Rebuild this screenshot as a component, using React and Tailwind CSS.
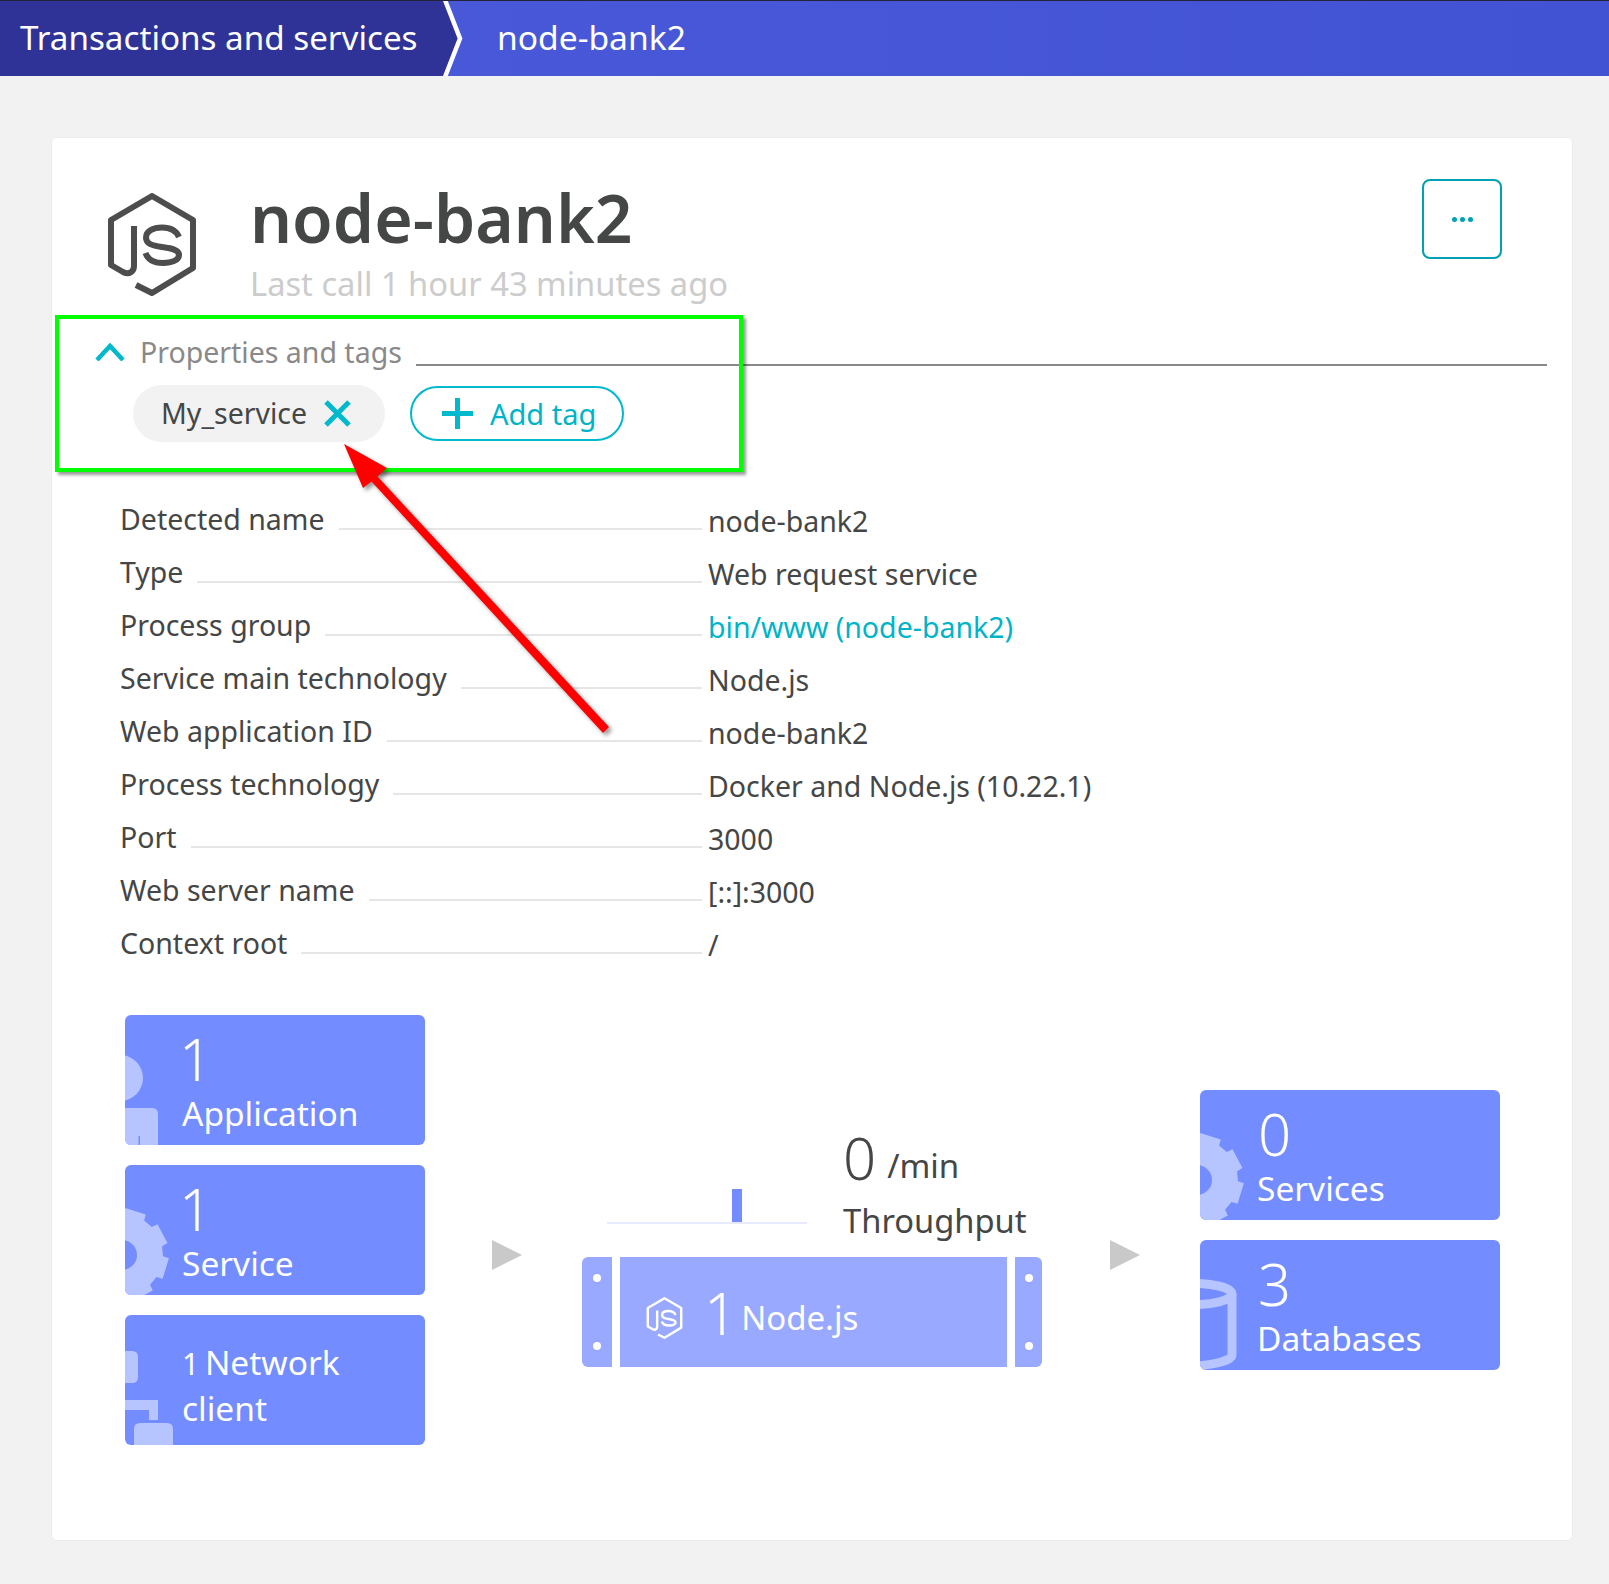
import React from 'react';

const rows = [
  ['Detected name', 'node-bank2'],
  ['Type', 'Web request service'],
  ['Process group', 'bin/www (node-bank2)', true],
  ['Service main technology', 'Node.js'],
  ['Web application ID', 'node-bank2'],
  ['Process technology', 'Docker and Node.js (10.22.1)'],
  ['Port', '3000'],
  ['Web server name', '[::]:3000'],
  ['Context root', '/'],
];

// gear outline, 8 teeth round 0,0
const gearPath = () => {
  const pts = [];
  for (let i = 0; i < 8; i++) {
    const a = (i * Math.PI) / 4 + 0.3;
    const w = 0.23;
    [[41, -w - 0.04], [47, -w], [47, w], [41, w + 0.04]].forEach(([r, d]) => {
      pts.push(`${(r * Math.cos(a + d)).toFixed(1)} ${(r * Math.sin(a + d)).toFixed(1)}`);
    });
  }
  return `M${pts.join('L')}Z`;
};

const JsIcon = ({ className, color }) => (
  <svg viewBox="14 13 88 103" className={className} fill="none" stroke={color} strokeWidth="6">
    <path d="M42 105 L58 113 L99 88 V40 L58 16 L17 40 V85 L29 92 C35 95 40 92 40 86 V46" strokeLinejoin="round" />
    <path d="M85 57 C82 50 75 47.5 68 47.5 C59 47.5 52 51 52 57.5 C52 64 58 65.5 68 67 C79 68.5 85 70 85 75 C85 80 78 83 69 83 C60 83 54 80 51.5 73" />
  </svg>
);

const TileIcon = ({ kind }) => (
  <svg viewBox="0 0 60 130" className="absolute left-0 top-0 w-[60px] h-[130px]" fill="#b6c4ff">
    {kind === 'person' && (
      <>
        <circle cx="-5" cy="63" r="23" />
        <path d="M0 93 H27 Q33 93 33 99 V130 H0 Z" />
        <path d="M13.5 121 H15 V130 H13.5 Z" fill="#738cff" />
      </>
    )}
    {kind === 'gear' && (
      <path d={gearPath()} transform="translate(-3 90)" fill="#b6c4ff" stroke="none" />
    )}
    {kind === 'gear' && <circle cx="-3" cy="90" r="15" fill="#738cff" />}
    {kind === 'network' && (
      <>
        <path d="M0 36 H7 Q13 36 13 42 V62 Q13 68 7 68 H0 Z" />
        <path d="M0 85 H33 V105 H24 V95 H0 Z" />
        <path d="M15 108 H42 Q48 108 48 114 V130 H9 V114 Q9 108 15 108 Z" />
      </>
    )}
    {kind === 'db' && (
      <g fill="none" stroke="#b6c4ff" strokeWidth="9">
        <ellipse cx="-12" cy="54" rx="44" ry="11" />
        <path d="M32 54 V115 Q32 123 -12 127" />
      </g>
    )}
  </svg>
);

const Tile = ({ kind, num, label }) => (
  <div className="relative h-[130px] w-[300px] overflow-hidden rounded-[6px] bg-[#738cff] pl-[57px] text-white">
    <TileIcon kind={kind} />
    <div className={`relative pt-[9px] text-[58px] font-light leading-[70px] ${num === '1' ? 'ml-[-3px]' : 'ml-[1px]'}`}>{num}</div>
    <div className="relative mt-[-1px] text-[33.5px] leading-[40px]">{label}</div>
  </div>
);

const Dots = () => (
  <>
    <span className="h-[8px] w-[8px] rounded-full bg-white" />
    <span className="h-[8px] w-[8px] rounded-full bg-white" />
  </>
);

const Play = () => (
  <svg viewBox="0 0 30 30" className="h-[30px] w-[30px] shrink-0">
    <path d="M0 0 L30 15 L0 30 Z" fill="#c9c9c9" />
  </svg>
);

export default function App() {
  return (
    <div className="relative h-[1584px] w-[1609px] overflow-hidden bg-[#f2f2f2] font-['Noto_Sans',sans-serif] text-[#454646]">
      {/* breadcrumb */}
      <div className="flex h-[76px] border-t border-[#23233a] bg-gradient-to-r from-[#4b5bda] to-[#4152d3] text-white">
        <div className="flex w-[442px] items-center bg-[#2f3397] pb-[2px] pl-[20px] text-[33.2px]">Transactions and services</div>
        <svg viewBox="0 0 24 75" className="h-[75px] w-[24px] shrink-0">
          <path d="M0 0 H3 L17.5 37.5 L3 75 H0 Z" fill="#2f3397" />
          <path d="M3 -1 L18 37.5 L3 76" fill="none" stroke="white" strokeWidth="4.5" />
        </svg>
        <div className="flex items-center pb-[2px] pl-[31px] text-[33.6px]">node-bank2</div>
      </div>

      {/* card */}
      <div className="ml-[51px] mt-[61px] h-[1404px] w-[1522px] rounded-[6px] border border-[#ececec] bg-white">
        <div className="flex h-[188px] items-start pt-[41px] pl-[55px] pr-[70px]">
          <JsIcon className="mt-[14px] h-[103px] w-[90px] shrink-0" color="#4d4d4d" />
          <div className="ml-[53px]">
            <div className="text-[66px] font-semibold leading-[76px]">node-bank2</div>
            <div className="pt-[6px] text-[32.7px] leading-[46px] text-[#cccccc]">Last call 1 hour 43 minutes ago</div>
          </div>
          <div className="ml-auto flex h-[80px] w-[80px] items-center justify-center gap-[3px] rounded-[8px] border-2 border-[#00a1b2]">
            <span className="h-[5px] w-[5px] rounded-full bg-[#00a1b2]" />
            <span className="h-[5px] w-[5px] rounded-full bg-[#00a1b2]" />
            <span className="h-[5px] w-[5px] rounded-full bg-[#00a1b2]" />
          </div>
        </div>

        {/* properties */}
        <div className="flex h-[44px] items-center pl-[43px] pr-[25px] pt-[8px]">
          <svg viewBox="0 0 30 18" className="h-[18px] w-[30px] shrink-0" fill="none" stroke="#00b9cc" strokeWidth="4.5">
            <path d="M2 17 L15 3 L28 17" />
          </svg>
          <span className="ml-[15px] whitespace-nowrap text-[28.5px] leading-[36px] text-[#898989]">Properties and tags</span>
          <div className="ml-[14px] mt-[26px] h-[2px] flex-1 bg-[#898989]" />
        </div>
        <div className="mt-[15px] flex items-center pl-[81px]">
          <div className="flex h-[57px] w-[252px] items-center rounded-full bg-[#f2f2f2] pl-[28px] text-[28.5px]">
            My_service
            <svg viewBox="0 0 27 27" className="ml-[17px] h-[27px] w-[27px]" stroke="#00b9cc" strokeWidth="5">
              <path d="M2 2 L25 25 M25 2 L2 25" />
            </svg>
          </div>
          <div className="ml-[25px] flex h-[55px] w-[214px] items-center rounded-full border-2 border-[#00b9cc] pl-[30px] text-[29px] text-[#00b4c8]">
            <svg viewBox="0 0 31 31" className="h-[31px] w-[31px]" stroke="#00b9cc" strokeWidth="5">
              <path d="M15.5 0 V31 M0 15.5 H31" />
            </svg>
            <span className="ml-[17px]">Add tag</span>
          </div>
        </div>

        {/* detail rows */}
        <div className="mt-[35px] pl-[68px]">
          {rows.map(([label, value, link]) => (
            <div key={label} className="flex h-[53px] text-[28.5px]">
              <div className="flex w-[582px] items-end">
                <span className="mb-[-11px] whitespace-nowrap leading-[44px]">{label}</span>
                <div className="ml-[14px] h-[2px] flex-1 bg-[#e6e6e6]" />
              </div>
              <span className={`ml-[6px] mt-[22px] whitespace-nowrap leading-[44px] ${link ? 'text-[#00b4c8]' : ''}`}>{value}</span>
            </div>
          ))}
        </div>

        {/* stack */}
        <div className="mt-[61px] flex pl-[73px]">
          <div className="flex flex-col gap-[20px]">
            <Tile kind="person" num="1" label="Application" />
            <Tile kind="gear" num="1" label="Service" />
            <div className="relative h-[130px] w-[300px] overflow-hidden rounded-[6px] bg-[#738cff] pl-[57px] pt-[25px] text-[33.5px] leading-[45px] text-white">
              <TileIcon kind="network" />
              <div className="relative"><span className="mr-[-3px] text-[30px]">1</span> Network</div>
              <div className="relative">client</div>
            </div>
          </div>
          <div className="ml-[67px] mt-[225px]"><Play /></div>
          <div className="ml-[60px] w-[460px] pt-[117px]">
            <div className="flex h-[125px]">
              <div className="relative ml-[25px] mt-[56px] h-[36px] w-[200px] border-b-2 border-[#e8ebff]">
                <div className="absolute bottom-0 left-[125px] h-[33px] w-[10px] bg-[#738cff]" />
              </div>
              <div className="ml-[36px] mt-[-5px]">
                <div className="flex items-baseline leading-[62px]">
                  <span className="text-[58px] font-light">0</span>
                  <span className="ml-[11px] -translate-y-[2px] text-[33px]">/min</span>
                </div>
                <div className="text-[32.7px] leading-[44px]">Throughput</div>
              </div>
            </div>
            <div className="flex h-[110px] gap-[8px] text-white">
              <div className="flex w-[30px] flex-col items-center justify-between rounded-l-[6px] bg-[#98a9ff] py-[17px]"><Dots /></div>
              <div className="flex w-[387px] items-center bg-[#98a9ff] pl-[26px]">
                <JsIcon className="mt-[12px] h-[42px] w-[37px]" color="white" />
                <span className="ml-[21px] text-[58px] font-light">1</span>
                <span className="ml-[4px] mt-[12px] text-[33px]">Node.js</span>
              </div>
              <div className="flex w-[27px] flex-col items-center justify-between rounded-r-[6px] bg-[#98a9ff] py-[17px]"><Dots /></div>
            </div>
          </div>
          <div className="ml-[68px] mt-[225px]"><Play /></div>
          <div className="ml-[60px] mt-[75px] flex flex-col gap-[20px]">
            <Tile kind="gear" num="0" label="Services" />
            <Tile kind="db" num="3" label="Databases" />
          </div>
        </div>
      </div>

      {/* annotation */}
      <div className="absolute left-[55px] top-[315px] h-[157px] w-[688px] border-4 border-[#00ff00] shadow-[3px_3px_3px_rgba(0,0,0,0.4)]" />
      <svg viewBox="0 0 1609 1584" className="absolute left-0 top-0 h-[1584px] w-[1609px] drop-shadow-[3px_3px_2px_rgba(0,0,0,0.4)]">
        <path d="M344 444 L387 468 L377.500 476.500 L609 727 L603 733 L371.500 481.500 L363 488 Z" fill="#ff0000" />
      </svg>
    </div>
  );
}
